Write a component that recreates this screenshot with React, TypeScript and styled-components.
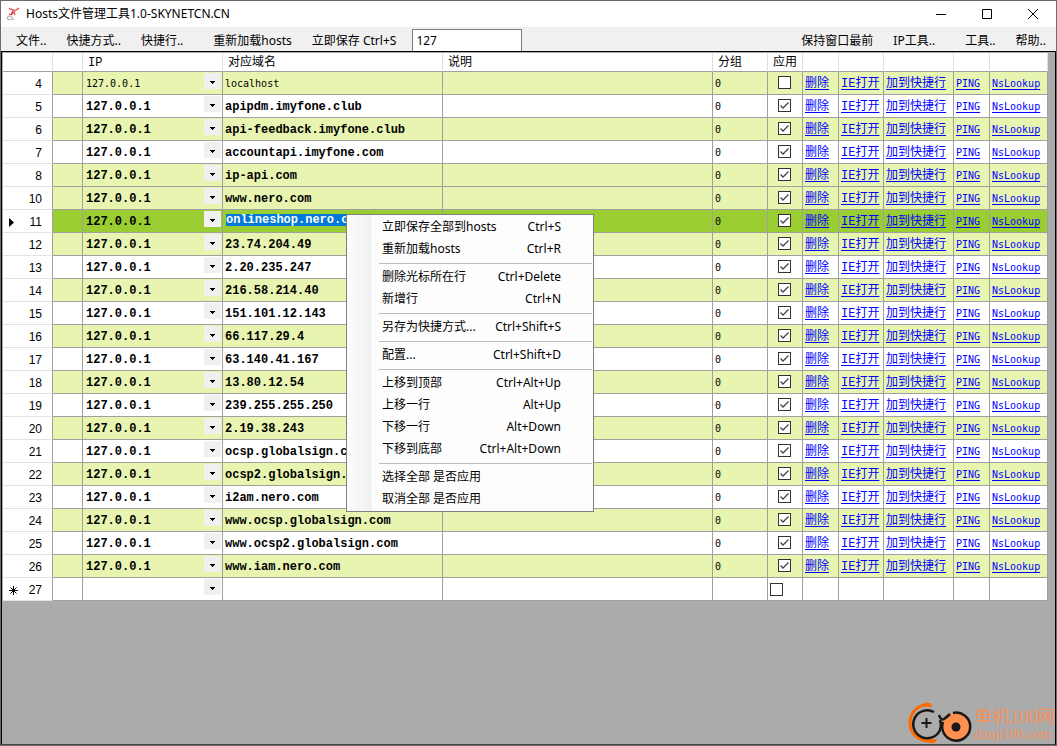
import React from 'react';
import styled, { createGlobalStyle, css } from 'styled-components';

const uiFont = '"Noto Sans", "Noto Sans CJK SC", sans-serif';
const gridFont = '"Liberation Mono", "Noto Sans CJK SC", monospace';

const GlobalStyle = createGlobalStyle`
  * { box-sizing: border-box; }
  body { margin: 0; font-family: ${uiFont}; font-size: 12px; color: #000; background: #ababab; }
  button, input, select { font: inherit; color: inherit; }
`;

const Window = styled.div`
  display: flex;
  flex-direction: column;
  min-height: 100vh;
  border: 1px solid #6b6b6b;
  overflow: hidden;
`;

const TitleBar = styled.header`
  display: flex;
  align-items: center;
  height: 26px;
  padding-left: 5px;
  background: #fff;
`;

const Title = styled.h1`
  flex: 1;
  margin: 0 0 0 6px;
  font-size: 12px;
  font-weight: 400;
  line-height: 24px;
  white-space: nowrap;
`;

const WindowButton = styled.button`
  display: flex;
  align-items: center;
  justify-content: center;
  width: 46px;
  height: 24px;
  padding: 0;
  border: 0;
  background: transparent;
`;

const MenuBar = styled.nav`
  display: flex;
  align-items: stretch;
  height: 24px;
  padding: 0 10px 0 15px;
  background: #f0f0f0;
`;

const MenuButton = styled.button<{ $gap?: number }>`
  margin: 0 0 0 ${p => p.$gap ?? 0}px;
  padding: 4px 0 0;
  border: 0;
  background: transparent;
  line-height: 20px;
  white-space: nowrap;
`;

const Spacer = styled.div`
  flex: 1;
`;

const SearchBox = styled.input`
  width: 110px;
  height: 22px;
  margin: 2px 0 0 16px;
  padding: 0 3px;
  border: 1px solid #7a7a7a;
  border-bottom: 0;
  background: #fff;
  outline: 0;
`;

const GridArea = styled.main`
  position: relative;
  flex: 1;
  padding: 1px 7px 0 1px;
  border: 1px solid #000;
  border-bottom-color: #444;
  background: #ababab;
`;

const Grid = styled.table`
  width: 100%;
  border-collapse: separate;
  border-spacing: 0;
  table-layout: fixed;
  background: #fff;
  font-family: ${gridFont};
`;

const HeadCell = styled.th`
  height: 19px;
  padding: 2px 5px 0;
  border-right: 1px solid #e0e0e0;
  border-bottom: 1px solid #a0a0a0;
  font-weight: 400;
  line-height: 16px;
  text-align: left;
  white-space: nowrap;
`;

type Tone = 'plain' | 'tinted' | 'current';
const toneColor: Record<Tone, string> = { plain: '#fff', tinted: '#e8f5b1', current: '#9acd32' };

const Row = styled.tr<{ $tone: Tone }>`
  background: ${p => toneColor[p.$tone]};
`;

const RowHead = styled.th`
  height: 23px;
  padding: 2px 10px 0 6px;
  border-right: 1px solid #a0a0a0;
  border-bottom: 1px solid #e3e3e3;
  background: #fff;
  font-family: "Liberation Sans", sans-serif;
  font-weight: 400;
  line-height: 16px;
`;

const RowHeadContent = styled.div`
  display: flex;
  align-items: center;
  justify-content: space-between;
`;

const Cell = styled.td<{ $center?: boolean }>`
  height: 23px;
  padding: ${p => (p.$center ? '0 3px 0 2px' : '2px 2px 0')};
  overflow: hidden;
  border-right: 1px solid #a0a0a0;
  border-bottom: 1px solid #a0a0a0;
  line-height: 20px;
  text-align: ${p => (p.$center ? 'center' : 'left')};
  white-space: nowrap;
`;

const regularText = css`
  font-family: "DejaVu Sans Mono", monospace;
  font-size: 10px;
  font-weight: 400;
`;

const Value = styled.span<{ $bold?: boolean }>`
  display: block;
  font-weight: 700;
  ${p => !p.$bold && regularText}
`;

const IpCell = styled(Cell)`
  padding: 1px 1px 0 3px;
`;

const IpContent = styled.div`
  display: flex;
  align-items: flex-end;
  justify-content: space-between;
  height: 21px;
`;

const DropButton = styled.button`
  display: flex;
  align-items: center;
  justify-content: center;
  align-self: flex-start;
  width: 17px;
  height: 16px;
  padding: 2px 0 0;
  border: 0;
  background: #f0f0f0;
`;

const HostEditor = styled.input`
  display: block;
  width: 121px;
  height: 12px;
  margin: 0 0 4px 1px;
  padding: 0;
  border: 0;
  outline: 0;
  background: #0078d7;
  color: #fff;
  font-weight: 700;
  line-height: 12px;
`;

const CheckBox = styled.input`
  appearance: none;
  display: inline-block;
  width: 13px;
  height: 13px;
  margin: 0;
  border: 1px solid #333;
  background: #fff;
  vertical-align: middle;
  &:checked {
    background: #fff url("data:image/svg+xml,%3Csvg xmlns='http://www.w3.org/2000/svg' viewBox='0 0 11 11'%3E%3Cpath d='M1.5 5.5l2.5 2.5 5.5-5.5' fill='none' stroke='%23444' stroke-width='1.3'/%3E%3C/svg%3E");
  }
`;

const ActionLink = styled.a<{ $latin?: boolean }>`
  display: block;
  color: #00f;
  text-decoration: underline;
  text-underline-offset: 2px;
  ${p => p.$latin && regularText}
`;

const ContextMenu = styled.div`
  position: absolute;
  top: 162px;
  left: 344px;
  width: 248px;
  padding: 2px 1px 0 0;
  border: 1px solid #808080;
  background: linear-gradient(to right, #fcfcfc, #f1f1f1 24px, #fdfdfd 25px);
`;

const MenuGroup = styled.div`
  margin-left: 32px;
  & + & {
    padding-top: 3px;
    border-top: 1px solid #bdbdbd;
  }
  &:not(:last-child) { padding-bottom: 2px; }
`;

const MenuItem = styled.button`
  display: flex;
  justify-content: space-between;
  width: 100%;
  height: 22px;
  padding: 0 31px 0 3px;
  border: 0;
  background: transparent;
  line-height: 20px;
  white-space: nowrap;
`;

const Watermark = styled.div`
  position: absolute;
  right: 0;
  bottom: 0;
  display: flex;
  align-items: flex-end;
  color: #f59058;
`;

const WatermarkText = styled.div`
  font-family: "Liberation Serif", "Noto Sans CJK SC", serif;
  font-size: 14px;
  line-height: 16px;
  padding-bottom: 1px;
  white-space: nowrap;
`;

const WatermarkName = styled.div`
  font-size: 18px;
  line-height: 20px;
`;

type Entry = { no: number; host: string };
const entries: Entry[] = [
  { no: 4, host: 'localhost' },
  { no: 5, host: 'apipdm.imyfone.club' },
  { no: 6, host: 'api-feedback.imyfone.club' },
  { no: 7, host: 'accountapi.imyfone.com' },
  { no: 8, host: 'ip-api.com' },
  { no: 10, host: 'www.nero.com' },
  { no: 11, host: 'onlineshop.nero.com' },
  { no: 12, host: '23.74.204.49' },
  { no: 13, host: '2.20.235.247' },
  { no: 14, host: '216.58.214.40' },
  { no: 15, host: '151.101.12.143' },
  { no: 16, host: '66.117.29.4' },
  { no: 17, host: '63.140.41.167' },
  { no: 18, host: '13.80.12.54' },
  { no: 19, host: '239.255.255.250' },
  { no: 20, host: '2.19.38.243' },
  { no: 21, host: 'ocsp.globalsign.com' },
  { no: 22, host: 'ocsp2.globalsign.com' },
  { no: 23, host: 'i2am.nero.com' },
  { no: 24, host: 'www.ocsp.globalsign.com' },
  { no: 25, host: 'www.ocsp2.globalsign.com' },
  { no: 26, host: 'www.iam.nero.com' },
];
const currentNo = 11;

const columns: { label: string; width?: number }[] = [
  { label: '', width: 50 },
  { label: '', width: 30 },
  { label: 'IP', width: 140 },
  { label: '对应域名', width: 220 },
  { label: '说明' },
  { label: '分组', width: 55 },
  { label: '应用', width: 35 },
  { label: '', width: 36 },
  { label: '', width: 45 },
  { label: '', width: 70 },
  { label: '', width: 36 },
  { label: '', width: 58 },
];

const actions = ['删除', 'IE打开', '加到快捷行', 'PING', 'NsLookup'];

const contextGroups: [string, string?][][] = [
  [['立即保存全部到hosts', 'Ctrl+S'], ['重新加载hosts', 'Ctrl+R']],
  [['删除光标所在行', 'Ctrl+Delete'], ['新增行', 'Ctrl+N']],
  [['另存为快捷方式...', 'Ctrl+Shift+S']],
  [['配置...', 'Ctrl+Shift+D']],
  [['上移到顶部', 'Ctrl+Alt+Up'], ['上移一行', 'Alt+Up'], ['下移一行', 'Alt+Down'], ['下移到底部', 'Ctrl+Alt+Down']],
  [['选择全部 是否应用'], ['取消全部 是否应用']],
];

const AppIcon = () => (
  <svg width="14" height="16" viewBox="0 0 14 16" fill="none" aria-hidden="true">
    <path d="M3 2l2 1.500M5 3l4 1.500M9 4.500l3-1.500M11 2l2 1M7 4l-2 5M9 5l-3 3M8 6l1 3M3 8l3 1" stroke="#e0474c" strokeWidth="1.200" />
    <path d="M1 11l3-1 3 2M2 14l4-1 2 1M3 10l-2 2 2 2" stroke="#b9b9b9" strokeWidth="1.200" />
  </svg>
);

const DropArrow = () => (
  <svg width="5" height="3" viewBox="0 0 5 3" shapeRendering="crispEdges" aria-hidden="true">
    <path d="M0 0h5v1h-1v1h-1v1h-1v-1h-1v-1h-1z" />
  </svg>
);

const CurrentMarker = () => (
  <svg width="5" height="9" viewBox="0 0 5 9" aria-hidden="true">
    <path d="M0 0l5 4.500-5 4.500z" />
  </svg>
);

const NewMarker = () => (
  <svg width="9" height="9" viewBox="0 0 9 9" aria-hidden="true">
    <path d="M4.500 0v9M0 4.500h9M1.500 1.500l6 6M7.500 1.500l-6 6" stroke="#000" />
  </svg>
);

const WatermarkLogo = () => (
  <svg width="67" height="42" viewBox="0 0 67 42" fill="none" aria-hidden="true">
    <path d="M24 3C12 1 3 10 3 21c0 11 9 19 24 18" stroke="#ff6a00" strokeWidth="3" />
    <path d="M14 4q5-5 8-3 3 1 3 4zM18 38q6 4 8 3 3 0 4-4z" fill="#ff6a00" />
    <path d="M27 10A14 14 0 1 0 33 28q2-5 0-10" stroke="#1c1817" strokeWidth="2.500" />
    <path d="M19.500 16v10M14.500 21h10" stroke="#1c1817" strokeWidth="2" />
    <circle cx="49" cy="25" r="14" fill="#ff9050" />
    <path d="M46 11a14 14 0 1 1-10 9M32 13q2 6 5 4t6-5" stroke="#1c1817" strokeWidth="2.500" />
    <circle cx="49" cy="25" r="4.500" fill="#1c1817" />
  </svg>
);

function HostRow({ entry, index }: { entry: Entry; index: number }) {
  const isCurrent = entry.no === currentNo;
  const bold = index > 0;
  return (
    <Row $tone={isCurrent ? 'current' : entry.no % 2 === 0 ? 'tinted' : 'plain'}>
      <RowHead scope="row">
        <RowHeadContent>
          {isCurrent ? <CurrentMarker /> : <span />}
          <span>{entry.no}</span>
        </RowHeadContent>
      </RowHead>
      <Cell />
      <IpCell>
        <IpContent>
          <Value $bold={bold}>127.0.0.1</Value>
          <DropButton aria-label="选择 IP"><DropArrow /></DropButton>
        </IpContent>
      </IpCell>
      <Cell>
        {isCurrent ? <HostEditor aria-label="对应域名" defaultValue={entry.host} /> : <Value $bold={bold}>{entry.host}</Value>}
      </Cell>
      <Cell />
      <Cell><Value>0</Value></Cell>
      <Cell $center><CheckBox type="checkbox" aria-label="应用" defaultChecked={bold} /></Cell>
      {actions.map(label => (
        <Cell key={label}>
          <ActionLink href="#" $latin={label === 'PING' || label === 'NsLookup'}>{label}</ActionLink>
        </Cell>
      ))}
    </Row>
  );
}

export default function App() {
  return (
    <Window>
      <GlobalStyle />
      <TitleBar>
        <AppIcon />
        <Title>Hosts文件管理工具1.0-SKYNETCN.CN</Title>
        <WindowButton aria-label="最小化">
          <svg width="10" height="10" shapeRendering="crispEdges"><path d="M0 5.500h10" stroke="#000" /></svg>
        </WindowButton>
        <WindowButton aria-label="最大化">
          <svg width="10" height="10"><path d="M.5.5h9v9h-9z" fill="none" stroke="#000" /></svg>
        </WindowButton>
        <WindowButton aria-label="关闭">
          <svg width="10" height="10"><path d="M0 0l10 10M10 0L0 10" stroke="#000" /></svg>
        </WindowButton>
      </TitleBar>
      <MenuBar>
        <MenuButton>文件..</MenuButton>
        <MenuButton $gap={20}>快捷方式..</MenuButton>
        <MenuButton $gap={20}>快捷行..</MenuButton>
        <MenuButton $gap={30}>重新加载hosts</MenuButton>
        <MenuButton $gap={20}>立即保存 Ctrl+S</MenuButton>
        <SearchBox aria-label="IP" defaultValue="127" />
        <Spacer />
        <MenuButton>保持窗口最前</MenuButton>
        <MenuButton $gap={20}>IP工具..</MenuButton>
        <MenuButton $gap={30}>工具..</MenuButton>
        <MenuButton $gap={20}>帮助..</MenuButton>
      </MenuBar>
      <GridArea>
        <Grid>
          <colgroup>
            {columns.map((c, i) => <col key={i} width={c.width} />)}
          </colgroup>
          <thead>
            <tr>{columns.map((c, i) => <HeadCell key={i} scope="col">{c.label}</HeadCell>)}</tr>
          </thead>
          <tbody>
            {entries.map((e, i) => <HostRow key={e.no} entry={e} index={i} />)}
            <Row $tone="plain">
              <RowHead scope="row"><RowHeadContent><NewMarker /><span>27</span></RowHeadContent></RowHead>
              <Cell />
              <IpCell>
                <IpContent>
                  <span />
                  <DropButton aria-label="选择 IP"><DropArrow /></DropButton>
                </IpContent>
              </IpCell>
              <Cell />
              <Cell />
              <Cell />
              <Cell><CheckBox type="checkbox" aria-label="应用" /></Cell>
              {actions.map(label => <Cell key={label} />)}
            </Row>
          </tbody>
        </Grid>
        <ContextMenu role="menu">
          {contextGroups.map((group, i) => (
            <MenuGroup key={i}>
              {group.map(([label, keys]) => (
                <MenuItem key={label} role="menuitem">
                  <span>{label}</span>
                  {keys && <span>{keys}</span>}
                </MenuItem>
              ))}
            </MenuGroup>
          ))}
        </ContextMenu>
        <Watermark>
          <WatermarkLogo />
          <WatermarkText>
            <WatermarkName>单机100网</WatermarkName>
            danji100.com
          </WatermarkText>
        </Watermark>
      </GridArea>
    </Window>
  );
}
